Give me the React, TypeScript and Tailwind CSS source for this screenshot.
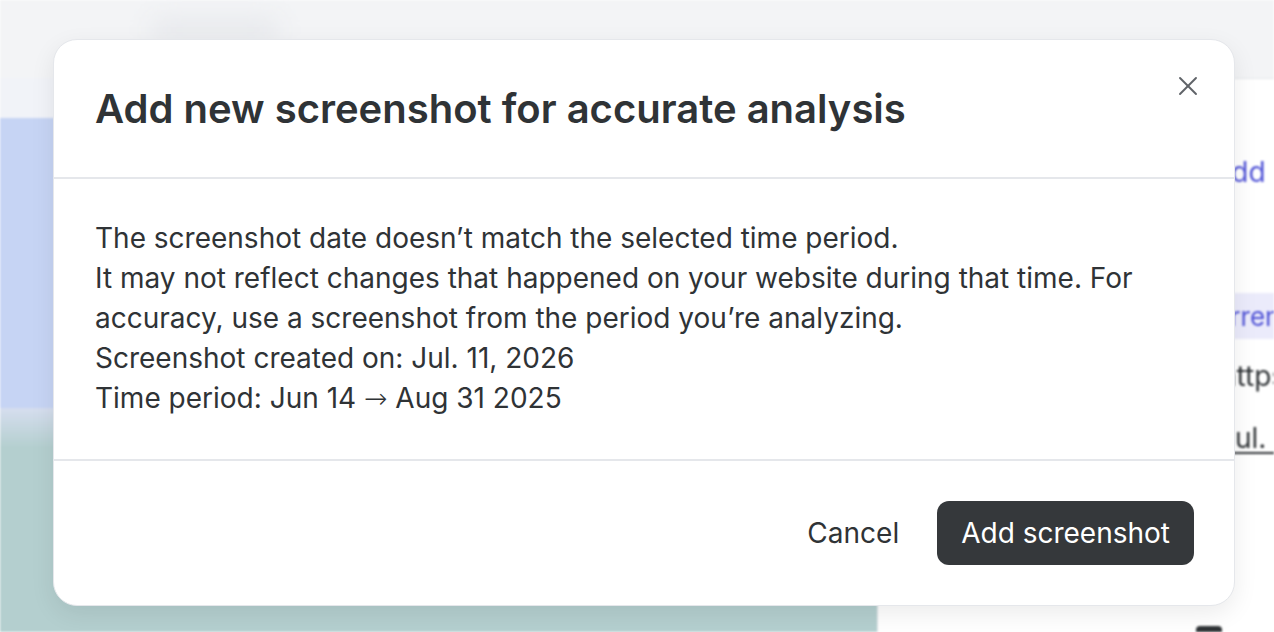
import { X } from "lucide-react";

function PageBehind() {
  return (
    <div className="flex h-[632px] w-[1274px] flex-col bg-[#f3f4f6] blur-[1px]">
      <div className="flex h-[78px] shrink-0 items-start gap-6 px-[150px] pt-5">
        <div className="h-5 w-[130px] rounded-full bg-[#e5e7eb] blur-md" />
      </div>
      <div className="flex min-h-0 flex-1">
        <div className="flex w-[877px] shrink-0 flex-col">
          <div className="h-[40px] bg-[#f1f3f8]" />
          <div className="h-[290px] bg-[#c6d4f4]" />
          <div className="h-[40px] bg-gradient-to-b from-[#d6deef] to-[#b4cfcf]" />
          <div className="flex-1 bg-[#b4cfcf]" />
        </div>
        <div className="flex min-w-0 flex-1 flex-col overflow-hidden whitespace-nowrap border-t border-l border-[#e5e7eb] bg-white pl-[334px] text-[28px]">
          <div className="pt-[72px] text-[#4f52d6]">Add image</div>
          <div className="-ml-[40px] mt-[100px] flex h-[46px] items-center bg-[#ebebfb] pl-[24px] text-[26px] text-[#4f52d6]">
            Current
          </div>
          <div className="ml-[8px] mt-[16px] text-[#2f3336]">https://example.com</div>
          <div className="ml-[7px] mt-[20px] text-[#2f3336] underline underline-offset-4">Jul. 11, 2026</div>
          <div className="ml-[-16px] mt-auto h-[6px] w-[26px] rounded-t-[4px] bg-[#2f3336]" />
        </div>
      </div>
    </div>
  );
}

export default function App() {
  return (
    <div className="relative h-[632px] w-[1274px] overflow-hidden font-['Inter',sans-serif]">
      <PageBehind />

      {/* dialog */}
      <div className="absolute left-[53px] top-[39px] flex w-[1182px] flex-col rounded-[24px] border border-[#e5e7eb] bg-white text-[#2f3336] shadow-[0_8px_24px_rgba(0,0,0,0.08)]">
        <div className="relative border-b-2 border-[#e5e7eb] px-[41px] pt-[49px] pb-[48px]">
          <h2 className="text-[40px] leading-[40px] font-semibold">
            Add new screenshot for accurate analysis
          </h2>
          <button className="absolute right-[30px] top-[30px] flex h-[32px] w-[32px] items-center justify-center text-[#5f6368]">
            <X className="h-[32px] w-[32px]" strokeWidth={1.4} />
          </button>
        </div>

        <div className="border-b-2 border-[#e5e7eb] px-[41px] pt-[39px] pb-[40px] text-[28px] leading-[40px]">
          <p>The screenshot date doesn’t match the selected time period.</p>
          <p>
            It may not reflect changes that happened on your website during that time. For
            accuracy, use a screenshot from the period you’re analyzing.
          </p>
          <p>Screenshot created on: Jul. 11, 2026</p>
          <p>
            Time period: Jun 14 <span className="font-['DejaVu_Sans',sans-serif] font-light">→</span> Aug 31 2025
          </p>
        </div>

        <div className="flex items-center justify-end gap-[14px] px-[40px] pt-[40px] pb-[40px]">
          <button className="h-[64px] px-6 text-[28px] text-[#2f3336]">Cancel</button>
          <button className="h-[64px] rounded-[12px] bg-[#35383b] px-6 text-[28px] text-white">
            Add screenshot
          </button>
        </div>
      </div>
    </div>
  );
}
